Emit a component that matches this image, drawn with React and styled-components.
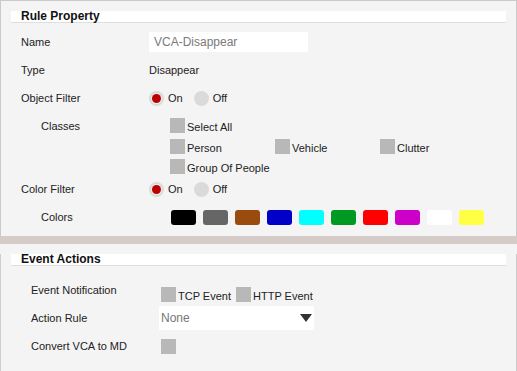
import React from "react";
import styled, { createGlobalStyle } from "styled-components";

const GlobalStyle = createGlobalStyle`
  html, body {
    margin: 0;
    padding: 0;
    background: #f4f4f4;
  }
  body {
    font-family: "Liberation Sans", Arial, sans-serif;
    font-size: 11px;
    color: #222;
  }
`;

const colors = ["#000000", "#666666", "#994c0e", "#0000c8", "#00ffff", "#009a22", "#ff0000", "#cc00c8", "#ffffff", "#ffff44"];

// Panel principal de arriba
const TopPanel = styled.div`
  background: #f4f4f4;
  border: solid 1px #cacaca;
  border-bottom: none;
  height: 235px;
  box-sizing: content-box;
`;

const Separator = styled.div`
  height: 8px;
  background: #d5cbc8;
`;

const BottomPanel = styled.div`
  background: #f4f4f4;
  border-left: solid 1px #d5cbc8;
  border-bottom: solid 1px #d5cbc8;
  border-right: solid 1px #cacaca;
  height: 126px;
`;

const Header = styled.div`
  margin: 10px 10px 0 10px;
  height: 11px;
  background: #ffffff;
  border-bottom: solid 1px #dedede;
  padding-left: 10px;
  font-size: 12px;
  font-weight: bold;
  line-height: 10px;
  color: #111;
`;

const Rows = styled.div`
  margin-top: ${(p) => p.$top}px;
  display: flex;
  flex-direction: column;
`;

const Row = styled.div`
  display: flex;
  align-items: ${(p) => (p.$top ? "flex-start" : "center")};
  min-height: 28px;
  padding-left: ${(p) => p.$indent}px;
`;

const Label = styled.div`
  width: ${(p) => p.$width}px;
  flex-shrink: 0;
  line-height: 28px;
`;

const TextInput = styled.div`
  width: 154px;
  height: 20px;
  background: #fff;
  color: #7a7a7a;
  padding-left: 5px;
  line-height: 20px;
  font-size: 12px;
`;

const RadioGroup = styled.div`
  display: flex;
  align-items: center;
  gap: 11px;
`;

const RadioItem = styled.div`
  display: flex;
  align-items: center;
  gap: 4px;
`;

const RadioCircle = styled.span`
  width: 15px;
  height: 15px;
  border-radius: 50%;
  background: #dadada;
  display: flex;
  align-items: center;
  justify-content: center;

  &::after {
    content: "";
    display: ${(p) => (p.$checked ? "block" : "none")};
    width: 9px;
    height: 9px;
    border-radius: 50%;
    background: #bb0000;
    box-shadow: 0 0 0 1px #ececec;
  }
`;

const ClassGrid = styled.div`
  display: grid;
  grid-template-columns: repeat(3, 105px);
  grid-auto-rows: 15px;
  row-gap: 5.5px;
  padding: 6px 0 1px 0;
  margin-left: ${(p) => p.$offset}px;
`;

const CheckItem = styled.div`
  display: flex;
  align-items: flex-end;
  height: 15px;
  white-space: nowrap;
  line-height: 11px;
`;

const CheckBox = styled.span`
  width: 15px;
  height: 15px;
  background: #b8b8b8;
  flex-shrink: 0;
  margin-right: ${(p) => (p.$alone ? 0 : 2)}px;
`;

const Swatches = styled.div`
  display: flex;
  gap: 7px;
  margin-left: 22px;
`;

const Swatch = styled.span`
  width: 25px;
  height: 15px;
  border-radius: 3px;
  background: ${(p) => p.$color};
`;

const CheckRow = styled.div`
  display: flex;
  gap: 5px;
  margin-top: 8px;
`;

const Select = styled.div`
  width: 153px;
  height: 24px;
  background: #fff;
  margin-left: -2px;
  padding-left: 2px;
  display: flex;
  align-items: center;
  justify-content: space-between;
  color: #777;
  font-size: 12px;
`;

const Arrow = styled.span`
  width: 0;
  height: 0;
  border-left: 6px solid transparent;
  border-right: 6px solid transparent;
  border-top: 8px solid #333;
  margin-right: 2px;
`;

const Check = ({ label, alone }) => (
  <CheckItem>
    <CheckBox $alone={alone} />
    {label}
  </CheckItem>
);

const Radios = () => (
  <RadioGroup>
    <RadioItem>
      <RadioCircle $checked />
      On
    </RadioItem>
    <RadioItem>
      <RadioCircle />
      Off
    </RadioItem>
  </RadioGroup>
);

export default function App() {
  return (
    <>
      <GlobalStyle />
      <TopPanel>
        <Header>Rule Property</Header>
        <Rows $top={5}>
          <Row $indent={20}>
            <Label $width={128}>Name</Label>
            <TextInput>VCA-Disappear</TextInput>
          </Row>
          <Row $indent={20}>
            <Label $width={128}>Type</Label>
            <span>Disappear</span>
          </Row>
          <Row $indent={20}>
            <Label $width={128}>Object Filter</Label>
            <Radios />
          </Row>
          <Row $indent={40} $top>
            <Label $width={108}>Classes</Label>
            <ClassGrid $offset={21}>
              <Check label="Select All" />
              <span />
              <span />
              <Check label="Person" />
              <Check label="Vehicle" />
              <Check label="Clutter" />
              <Check label="Group Of People" />
            </ClassGrid>
          </Row>
          <Row $indent={20}>
            <Label $width={128}>Color Filter</Label>
            <Radios />
          </Row>
          <Row $indent={40}>
            <Label $width={108}>Colors</Label>
            <Swatches>
              {colors.map((c) => (
                <Swatch key={c} $color={c} />
              ))}
            </Swatches>
          </Row>
        </Rows>
      </TopPanel>
      <Separator />
      <BottomPanel>
        <Header>Event Actions</Header>
        <Rows $top={10}>
          <Row $indent={30}>
            <Label $width={130}>Event Notification</Label>
            <CheckRow>
              <Check label="TCP Event" />
              <Check label="HTTP Event" />
            </CheckRow>
          </Row>
          <Row $indent={30}>
            <Label $width={130}>Action Rule</Label>
            <Select>
              None
              <Arrow />
            </Select>
          </Row>
          <Row $indent={30}>
            <Label $width={130}>Convert VCA to MD</Label>
            <CheckBox $alone />
          </Row>
        </Rows>
      </BottomPanel>
    </>
  );
}
